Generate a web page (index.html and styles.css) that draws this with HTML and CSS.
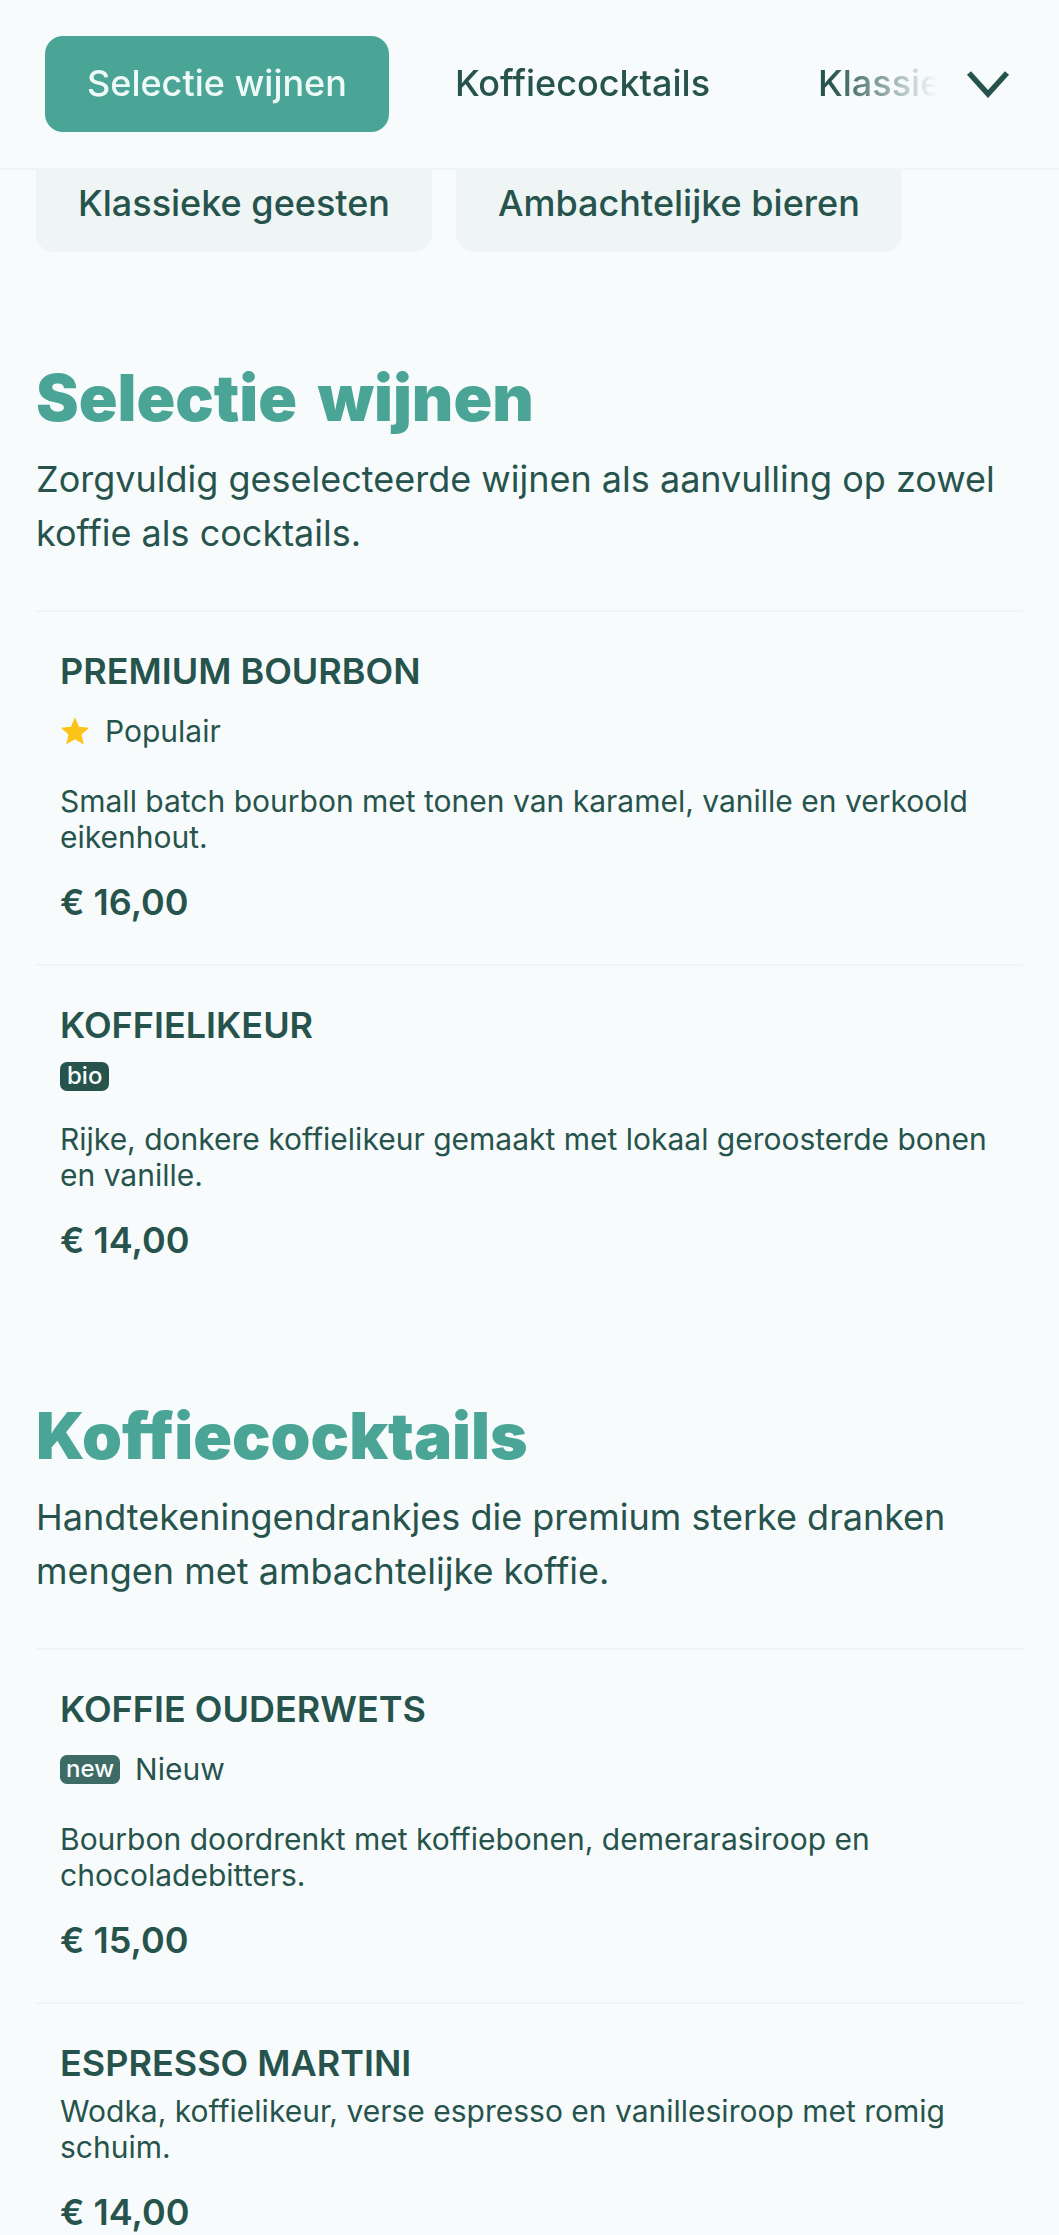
FILE: index.html
```html
<!DOCTYPE html>
<html lang="nl">
  <head>
    <meta charset="UTF-8" />
    <meta name="viewport" content="width=device-width, initial-scale=1.0" />
    <title>Menu</title>
    <link rel="stylesheet" href="styles.css">
  </head>
  <body>
    <header class="tabbar">
      <nav class="tabs">
        <a class="tab tab-active">Selectie wijnen</a>
        <a class="tab">Koffiecocktails</a>
        <a class="tab">Klassieke geesten</a>
      </nav>
      <svg class="tabs-toggle" viewBox="0 0 44 28">
        <path d="M3 3l19 21L41 3" fill="none" stroke="#27534d" stroke-width="5.5"></path>
      </svg>
    </header>

    <main class="menu">
      <div class="categories">
        <a class="category">Klassieke geesten</a>
        <a class="category">Ambachtelijke bieren</a>
      </div>

      <section class="section section-first">
        <h2 class="section-title">Selectie wijnen</h2>
        <p class="section-intro">Zorgvuldig geselecteerde wijnen als aanvulling op zowel koffie als cocktails.</p>

        <article class="item">
          <h3 class="item-name">PREMIUM BOURBON</h3>
          <div class="item-tags">
            <svg class="star" viewBox="0 0 24 24">
              <polygon points="12,1 15.2,8.6 23.4,9.3 17.2,14.7 19.1,22.8 12,18.5 4.9,22.8 6.8,14.7 0.6,9.3 8.8,8.6" fill="#fcc419"></polygon>
            </svg>
            <span class="tag-label">Populair</span>
          </div>
          <p class="item-desc">Small batch bourbon met tonen van karamel, vanille en verkoold eikenhout.</p>
          <div class="item-price">€ 16,00</div>
        </article>

        <article class="item">
          <h3 class="item-name">KOFFIELIKEUR</h3>
          <div class="item-tags item-tags-tight">
            <span class="badge">bio</span>
          </div>
          <p class="item-desc">Rijke, donkere koffielikeur gemaakt met lokaal geroosterde bonen en vanille.</p>
          <div class="item-price">€ 14,00</div>
        </article>
      </section>

      <section class="section">
        <h2 class="section-title">Koffiecocktails</h2>
        <p class="section-intro">Handtekeningendrankjes die premium sterke dranken mengen met ambachtelijke koffie.</p>

        <article class="item">
          <h3 class="item-name">KOFFIE OUDERWETS</h3>
          <div class="item-tags">
            <span class="badge badge-new">new</span>
            <span class="tag-label">Nieuw</span>
          </div>
          <p class="item-desc">Bourbon doordrenkt met koffiebonen, demerarasiroop en chocoladebitters.</p>
          <div class="item-price">€ 15,00</div>
        </article>

        <article class="item">
          <h3 class="item-name">ESPRESSO MARTINI</h3>
          <p class="item-desc item-desc-tight">Wodka, koffielikeur, verse espresso en vanillesiroop met romig schuim.</p>
          <div class="item-price">€ 14,00</div>
        </article>
      </section>
    </main>
  </body>
</html>
```

FILE: styles.css
```css
html,
body {
  height: 2235px;
  overflow: hidden;
}

body {
  font-family: "Inter", sans-serif;
  background-color: #f7fbfc;
  color: #27534d;
  margin: 0;
}

.tabbar {
  height: 170px;
  box-sizing: border-box;
  padding: 36px 36px 0 45px;
  border-bottom: 2px solid #eff5f5;
  display: flex;
  align-items: flex-start;
  justify-content: space-between;
}

.tabs {
  width: 892px;
  display: flex;
  gap: 24px;
  overflow: hidden;
  -webkit-mask-image: linear-gradient(to right, #000 88%, transparent 100%);
  mask-image: linear-gradient(to right, #000 88%, transparent 100%);
}

.tab {
  flex: none;
  height: 96px;
  line-height: 94px;
  padding: 0 42px;
  font-size: 36px;
  font-weight: 500;
  border-radius: 18px;
}

.tab-active {
  background: #4aa596;
  color: #eefaf7;
}

.tabs-toggle {
  width: 44px;
  height: 28px;
  margin: 34px 13px 0 0;
}

.menu {
  padding: 0 36px;
}

.categories {
  display: flex;
  gap: 24px;
}

.category {
  height: 82px;
  line-height: 67px;
  padding: 0 42px;
  font-size: 36px;
  font-weight: 500;
  background: #eef5f4;
  border-radius: 0 0 18px 18px;
}

.section {
  padding-top: 96px;
}

.section-first {
  padding-top: 108px;
}

.section-title {
  margin: 0;
  font-size: 64px;
  line-height: 76px;
  font-weight: 900;
  word-spacing: 8px;
  color: #4aa596;
}

.section-intro {
  margin: 16px 0 50px;
  font-size: 36px;
  line-height: 54px;
}

.item {
  border-top: 2px solid #eff5f5;
  padding: 37px 24px 40px;
}

.item-name {
  margin: 0;
  font-size: 36px;
  line-height: 44px;
  font-weight: 600;
}

.item-tags {
  height: 44px;
  margin-top: 16px;
  display: flex;
  align-items: center;
  gap: 15px;
}

.item-tags-tight {
  height: 30px;
  margin: 14px 0 30px;
}

.star {
  width: 30px;
  height: 30px;
}

.tag-label {
  font-size: 30px;
}

.badge {
  height: 29px;
  line-height: 28px;
  padding: 0 7px;
  font-size: 24px;
  font-weight: 500;
  color: #f7fbfc;
  background: #27534d;
  border-radius: 7px;
}

.badge-new {
  padding: 0 6px;
  background: #3f6b66;
}

.item-desc {
  margin: 30px 0 0;
  font-size: 30px;
  line-height: 36px;
}

.item-tags-tight + .item-desc {
  margin-top: 0;
}

.item-desc-tight {
  margin-top: 8px;
}

.item-price {
  margin-top: 25px;
  font-size: 36px;
  line-height: 44px;
  font-weight: 600;
}
```
